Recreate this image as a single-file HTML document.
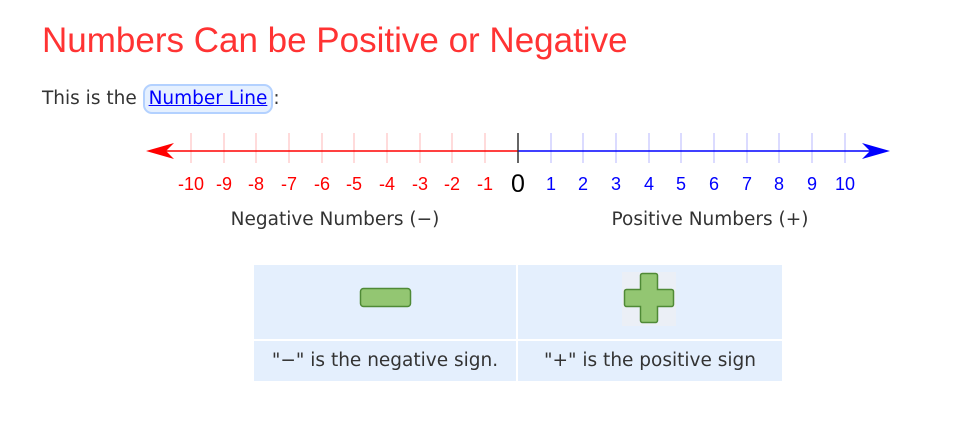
<!DOCTYPE html>
<html><head><meta charset="utf-8"><style>
body{margin:0;width:960px;height:439px;background:#fff;position:relative;overflow:hidden;font-family:"DejaVu Sans",Verdana,sans-serif;color:#333}
h1{position:absolute;left:42px;top:21px;margin:0;font:normal 35px "Liberation Sans",sans-serif;color:#f33;letter-spacing:0;white-space:nowrap}
.p{position:absolute;left:42px;top:84px;font-size:18.5px;white-space:nowrap}
.lk{display:inline-block;background:#e5f0ff;border:2px solid #b3d1ff;border-radius:9px;padding:0 4px;line-height:26px;color:#00f;text-decoration:underline}
.t{position:absolute;left:254px;top:265px;width:528px;height:116px}
.c{position:absolute;background:#e4effd}
.cap{font-size:18.5px;text-align:center;line-height:40px;color:#333;white-space:nowrap}
</style></head><body>
<h1>Numbers Can be Positive or Negative</h1>
<div class="p">This is the <span class="lk">Number Line</span>:</div>
<svg style="position:absolute;left:0;top:0" width="960" height="260">
<g stroke="#f88" stroke-width="1" opacity="0.6">
<line x1="191" y1="133" x2="191" y2="163"/><line x1="224" y1="133" x2="224" y2="163"/><line x1="256" y1="133" x2="256" y2="163"/><line x1="289" y1="133" x2="289" y2="163"/><line x1="322" y1="133" x2="322" y2="163"/><line x1="354" y1="133" x2="354" y2="163"/><line x1="387" y1="133" x2="387" y2="163"/><line x1="420" y1="133" x2="420" y2="163"/><line x1="452" y1="133" x2="452" y2="163"/><line x1="485" y1="133" x2="485" y2="163"/>
</g>
<g stroke="#88f" stroke-width="1" opacity="0.6">
<line x1="551" y1="133" x2="551" y2="163"/><line x1="583" y1="133" x2="583" y2="163"/><line x1="616" y1="133" x2="616" y2="163"/><line x1="649" y1="133" x2="649" y2="163"/><line x1="681" y1="133" x2="681" y2="163"/><line x1="714" y1="133" x2="714" y2="163"/><line x1="747" y1="133" x2="747" y2="163"/><line x1="779" y1="133" x2="779" y2="163"/><line x1="812" y1="133" x2="812" y2="163"/><line x1="845" y1="133" x2="845" y2="163"/>
</g>
<line x1="160" y1="151" x2="518" y2="151" stroke="#f00" stroke-width="1.5"/>
<line x1="518" y1="151" x2="875" y2="151" stroke="#00f" stroke-width="1.5"/>
<path d="M146 151 L174 143 L166 151 L174 159 Z" fill="#f00"/>
<path d="M890 151 L862 143 L870 151 L862 159 Z" fill="#00f"/>
<line x1="518" y1="133" x2="518" y2="163" stroke="#333" stroke-width="1.5"/>
<g font-family="Liberation Sans,sans-serif" font-size="18" fill="#f00" text-anchor="middle">
<text x="191" y="190">-10</text><text x="224" y="190">-9</text><text x="256" y="190">-8</text><text x="289" y="190">-7</text><text x="322" y="190">-6</text><text x="354" y="190">-5</text><text x="387" y="190">-4</text><text x="420" y="190">-3</text><text x="452" y="190">-2</text><text x="485" y="190">-1</text>
</g>
<text x="518" y="192" font-family="Liberation Sans,sans-serif" font-size="25" text-anchor="middle" fill="#000">0</text>
<g font-family="Liberation Sans,sans-serif" font-size="18" fill="#00f" text-anchor="middle">
<text x="551" y="190">1</text><text x="583" y="190">2</text><text x="616" y="190">3</text><text x="649" y="190">4</text><text x="681" y="190">5</text><text x="714" y="190">6</text><text x="747" y="190">7</text><text x="779" y="190">8</text><text x="812" y="190">9</text><text x="845" y="190">10</text>
</g>
<g font-family="DejaVu Sans,sans-serif" font-size="18.5" fill="#333" text-anchor="middle">
<text x="335" y="225">Negative Numbers (−)</text><text x="710" y="225">Positive Numbers (+)</text>
</g>
</svg>
<div class="t">
<div class="c" style="left:0;top:0;width:262px;height:74px"></div>
<div class="c" style="left:264px;top:0;width:264px;height:74px"></div>
<div class="c cap" style="left:0;top:76px;width:262px;height:40px">"−" is the negative sign.</div>
<div class="c cap" style="left:264px;top:76px;width:264px;height:40px">"+" is the positive sign</div>
<svg style="position:absolute;left:0;top:0" width="528" height="74">
<rect x="106.5" y="23.5" width="50" height="18" rx="3" fill="#93c672" stroke="#4f8a36" stroke-width="1.5"/>
<rect x="368" y="7" width="54" height="54" fill="#ebeff6"/>
<path d="M388.5 8.5 h13 a2 2 0 0 1 2 2 v14 h14 a2 2 0 0 1 2 2 v13 a2 2 0 0 1 -2 2 h-14 v14 a2 2 0 0 1 -2 2 h-13 a2 2 0 0 1 -2 -2 v-14 h-14 a2 2 0 0 1 -2 -2 v-13 a2 2 0 0 1 2 -2 h14 v-14 a2 2 0 0 1 2 -2z" fill="#93c672" stroke="#4f8a36" stroke-width="1.5"/>
</svg>
</div>
</body></html>
